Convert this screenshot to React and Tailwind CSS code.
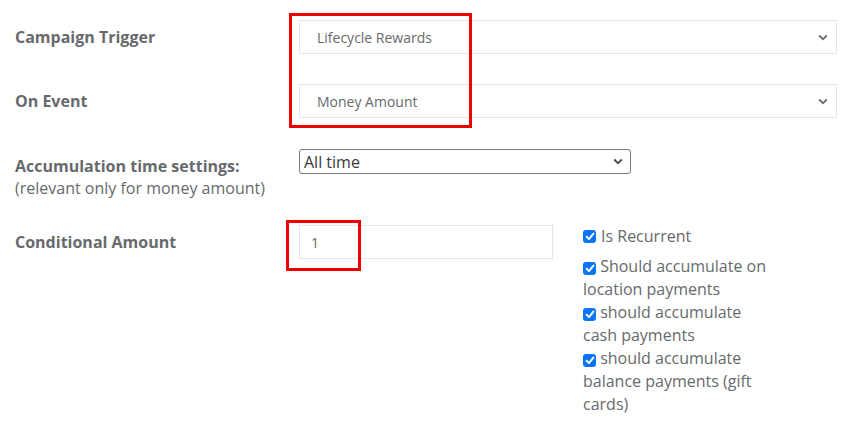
import React from "react";

function Chevron({ className }) {
  return (
    <svg width="10" height="7" viewBox="0 0 10 7" className={className}>
      <path d="M1.2 1.5 L5 5.2 L8.8 1.5" fill="none" stroke="currentColor" strokeWidth="1.8" />
    </svg>
  );
}

function Check() {
  return (
    <span className="inline-flex h-[13px] w-[13px] shrink-0 items-center justify-center rounded-[3px] bg-[#0a76f6] align-[-1px]">
      <svg width="10" height="9" viewBox="0 0 10 9">
        <path d="M1.6 4.8 L4 7.1 L8.4 1.6" fill="none" stroke="#fff" strokeWidth="1.9" strokeLinecap="round" strokeLinejoin="round" />
      </svg>
    </span>
  );
}

function FormSelect({ value }) {
  return (
    <div className="flex h-[34px] w-[538px] items-center justify-between border border-[#e5e6e7] bg-white pl-[17px] pr-[8px] text-[14px] text-[#676a6c]">
      <span>{value}</span>
      <Chevron className="text-[#6b6b6b]" />
    </div>
  );
}

export default function App() {
  return (
    <div
      className="relative h-[427px] w-[849px] overflow-hidden bg-white text-[#676a6c]"
      style={{ fontFamily: '"Open Sans", "Liberation Sans", sans-serif' }}
    >
      <div className="flex flex-col pl-[15px] pt-[20px]">
        <div className="flex items-center">
          <div className="w-[284px] text-[16px] font-bold">Campaign Trigger</div>
          <FormSelect value="Lifecycle Rewards" />
        </div>
        <div className="mt-[30px] flex items-center">
          <div className="w-[284px] text-[16px] font-bold">On Event</div>
          <FormSelect value="Money Amount" />
        </div>
        <div className="mt-[31px] flex items-start">
          <div className="w-[284px] pt-[6px] text-[16px] leading-[22px]">
            <div className="font-bold">Accumulation time settings:</div>
            <div>(relevant only for money amount)</div>
          </div>
          <div className="flex h-[25px] w-[332px] items-center justify-between rounded-[3px] border border-[#7a7a7a] bg-white pl-[4px] pr-[7px] text-[16px] text-[#3a3a3a]">
            <span>All time</span>
            <Chevron className="text-[#4a4a4a]" />
          </div>
        </div>
        <div className="mt-[26px] flex items-start">
          <div className="flex h-[34px] w-[284px] items-center text-[16px] font-bold">Conditional Amount</div>
          <div className="flex h-[34px] w-[254px] items-center border border-[#e5e6e7] bg-white pl-[11px] text-[14px] text-[#676a6c]">
            1
          </div>
          <div className="ml-[30px] w-[190px] text-[16px] leading-[23px]">
            <div className="flex items-center gap-[5px]">
              <Check />
              <span>Is Recurrent</span>
            </div>
            <div className="mt-[7px]">
              <Check /> Should accumulate on location payments
            </div>
            <div>
              <Check /> should accumulate cash payments
            </div>
            <div>
              <Check /> should accumulate balance payments (gift cards)
            </div>
          </div>
        </div>
      </div>

      <div className="pointer-events-none absolute left-[289px] top-[13px] h-[115px] w-[183px] border-[3px] border-[#ee0000]" />
      <div className="pointer-events-none absolute left-[286px] top-[220px] h-[51px] w-[75px] border-[3px] border-[#ee0000]" />
    </div>
  );
}
